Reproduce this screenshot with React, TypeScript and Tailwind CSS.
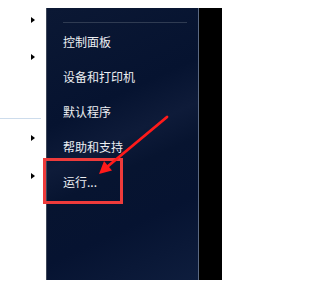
const menuItems = ["控制面板", "设备和打印机", "默认程序", "帮助和支持", "运行..."];

function Caret({ className = "" }: { className?: string }) {
  return (
    <div
      className={`ml-[31px] h-0 w-0 border-y-[3.5px] border-l-4 border-y-transparent border-l-black ${className}`}
    />
  );
}

export default function App() {
  return (
    <div
      className="relative h-[285px] w-[222px] overflow-hidden bg-white"
      style={{ fontFamily: '"Noto Sans CJK SC", "Noto Sans", sans-serif' }}
    >
      <div className="mt-2 flex h-[272px]">
        {/* left edge of the parent menu */}
        <div className="flex w-[46px] flex-col">
          <Caret className="mt-[8.5px]" />
          <Caret className="mt-[31px]" />
          <div className="mt-[58px] h-px w-[41px] bg-[#cddcec]" />
          <Caret className="mt-[16px]" />
          <Caret className="mt-[32px]" />
        </div>

        {/* start menu right pane */}
        <div className="flex w-[153px] flex-col border-x border-l-[#3d4658] border-r-[#5b6982] bg-[linear-gradient(155deg,#0b1834_0%,#061330_35%,#0e1b39_48%,#071430_58%,#061331_75%,#0e1d3d_100%)]">
          <div className="ml-4 mt-[14px] h-px w-[124px] bg-[#2f3b52]" />
          <div className="mt-px flex flex-col">
            {menuItems.map((item) => (
              <div
                key={item}
                className="flex h-[35px] items-center pl-4 text-[12px] leading-none text-[#eceef2]"
              >
                {item}
              </div>
            ))}
          </div>
        </div>

        <div className="flex-1 bg-black" />
      </div>

      {/* annotation: box around 运行 */}
      <div className="absolute left-[43px] top-[158px] h-[46px] w-[80px] border-[3px] border-[#ee3b3b]" />

      {/* annotation: arrow */}
      <svg
        className="absolute left-0 top-0"
        width="222"
        height="285"
        viewBox="0 0 222 285"
      >
        <line x1="167" y1="117" x2="107" y2="167" stroke="#ff1a1a" strokeWidth="2.8" strokeLinecap="round" />
        <polygon points="99,174 112,170.5 104,161" fill="#ff1a1a" />
      </svg>
    </div>
  );
}
